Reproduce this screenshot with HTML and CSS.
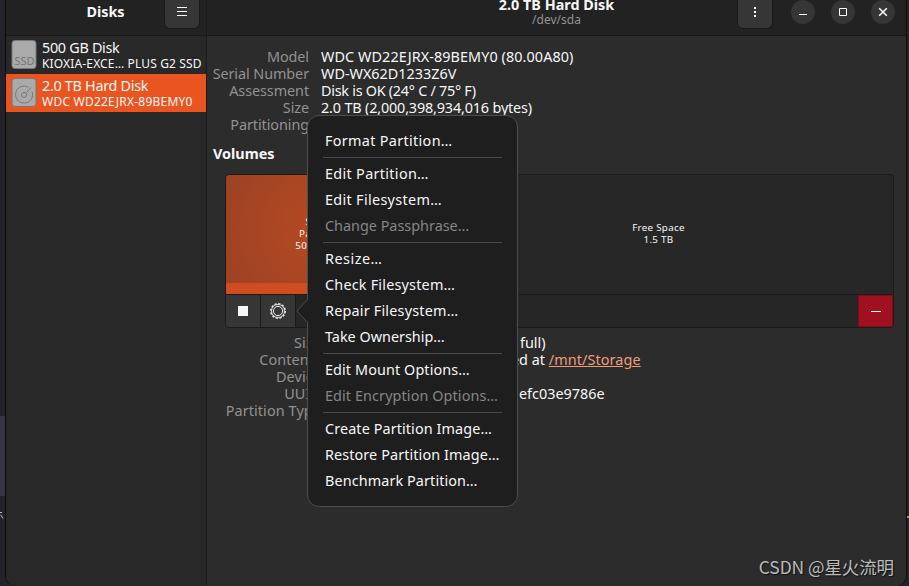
FILE: index.html
```html
<!doctype html>
<html lang="en">
<head>
    <meta charset="utf-8">
    <title>Disks</title>
    <link rel="stylesheet" href="styles.css">
</head>
<body>
<div class="desktop">
    <div class="dock"></div>
    <svg class="cursor" width="4" height="9" viewBox="0 0 4 9"><path d="M0 1.5h2M0 3.5l1.500 1.500L3 7.500" fill="none" stroke="#bbb"/></svg>
    <span class="speck"></span>

    <div class="window">
        <div class="sidebar">
            <div class="header">
                <h1>Disks</h1>
                <button class="square">
                    <svg width="12" height="12" viewBox="0 0 12 12"><path d="M1 1.500h10M1 5.500h10M1 9.500h10" stroke="#fff"/></svg>
                </button>
            </div>
            <ul class="disks">
                <li>
                    <svg width="26" height="30" viewBox="0 0 26 30">
                        <rect class="case" x="1" y=".5" width="24" height="28" rx="3"/>
                        <text x="3.500" y="25" class="ssd">SSD</text>
                    </svg>
                    <div><b>500 GB Disk</b><span class="kioxia">KIOXIA-EXCE… PLUS G2 SSD</span></div>
                </li>
                <li class="active">
                    <svg width="26" height="30" viewBox="0 0 26 30">
                        <rect class="case" x="1" y=".5" width="24" height="28" rx="3"/>
                        <g fill="none" stroke="#777">
                            <path d="M17.500 9.300A8.500 8.500 0 1 0 21.200 14"/>
                            <circle cx="13" cy="17" r="2.500"/>
                            <path d="M20 9.500l-4.500 5"/>
                        </g>
                    </svg>
                    <div><b class="hd">2.0 TB Hard Disk</b><span class="wdc">WDC WD22EJRX-89BEMY0</span></div>
                </li>
            </ul>
        </div>

        <div class="main">
            <div class="header">
                <div class="title"><b>2.0 TB Hard Disk</b><span>/dev/sda</span></div>
                <button class="square">
                    <svg width="12" height="12" viewBox="0 0 12 12"><path d="M5 1h2v2H5zM5 5h2v2H5zM5 9h2v2H5z" fill="#fff"/></svg>
                </button>
                <div class="controls">
                    <button><svg width="12" height="12" viewBox="0 0 12 12"><path d="M2 8.500h8" stroke="#fff"/></svg></button>
                    <button><svg width="12" height="12" viewBox="0 0 12 12"><path d="M2.500 2.500h7v7h-7z" fill="none" stroke="#fff"/></svg></button>
                    <button><svg width="12" height="12" viewBox="0 0 12 12"><path d="M2.200 2.200l7.600 7.600M9.800 2.200L2.200 9.800" stroke="#fff" stroke-width="1.500"/></svg></button>
                </div>
            </div>

            <dl class="info drive">
                <dt>Model</dt><dd class="model">WDC WD22EJRX-89BEMY0 (80.00A80)</dd>
                <dt>Serial Number</dt><dd>WD-WX62D1233Z6V</dd>
                <dt>Assessment</dt><dd class="smart">Disk is OK (24° C / 75° F)</dd>
                <dt>Size</dt><dd class="size">2.0 TB (2,000,398,934,016 bytes)</dd>
                <dt>Partitioning</dt><dd></dd>
            </dl>

            <h2>Volumes</h2>

            <div class="volumes">
                <div class="grid">
                    <div class="part">Storage<br>Partition 1<br>500 GB Ext4</div>
                    <div class="free">Free Space<br>1.5 TB</div>
                </div>
                <div class="toolbar">
                    <button><svg width="10" height="10" viewBox="0 0 10 10"><path d="M0 0h10v10H0z" fill="#f7f7f7"/></svg></button>
                    <button>
                        <svg width="16" height="16" viewBox="0 0 16 16" fill="none" stroke="#eee">
                            <circle cx="8" cy="8" r="7.300" stroke-width="1.300" stroke-dasharray="2.300 1.522"/>
                            <circle cx="8" cy="8" r="6.500" stroke-width=".9"/>
                            <circle cx="8" cy="8" r="4.600"/>
                        </svg>
                    </button>
                    <button class="delete"><svg width="10" height="10" viewBox="0 0 10 10"><path d="M0 5.500h10" stroke="#fff"/></svg></button>
                </div>
            </div>

            <dl class="info volume">
                <dt>Size</dt><dd class="full">full)</dd>
                <dt>Contents</dt><dd class="mount">ed at <a>/mnt/Storage</a></dd>
                <dt>Device</dt><dd></dd>
                <dt>UUID</dt><dd class="uuid">efc03e9786e</dd>
                <dt>Partition Type</dt><dd></dd>
            </dl>
        </div>
    </div>

    <div class="menu">
        <svg class="arrow" width="12" height="24" viewBox="0 0 12 24"><path d="M12 0L1 12l11 12" fill="#1e1e1e" stroke="#4d4d4d"/></svg>
        <ul>
            <li class="wide">Format Partition…</li>
        </ul>
        <ul>
            <li class="wide">Edit Partition…</li>
            <li class="wide">Edit Filesystem…</li>
            <li class="off">Change Passphrase…</li>
        </ul>
        <ul>
            <li class="wider">Resize…</li>
            <li class="mid">Check Filesystem…</li>
            <li class="mid">Repair Filesystem…</li>
            <li>Take Ownership…</li>
        </ul>
        <ul>
            <li class="slim">Edit Mount Options…</li>
            <li class="slim off">Edit Encryption Options…</li>
        </ul>
        <ul>
            <li class="slim">Create Partition Image…</li>
            <li class="slim">Restore Partition Image…</li>
            <li class="slim">Benchmark Partition…</li>
        </ul>
    </div>

    <div class="watermark">CSDN @星火流明</div>
</div>
</body>
</html>
```
FILE: styles.css
```css
*{margin: 0; padding: 0; box-sizing: border-box;}
body{width: 909px; height: 586px; overflow: hidden; background: #24232c; color: #f7f7f7; font: 14.4px/17px "Noto Sans", "Open Sans", sans-serif;}
ul{list-style: none;}
button{border: 0; color: #fff; background: #363636; display: flex; align-items: center; justify-content: center;}
svg{display: block; flex: none;}

.desktop{position: relative; width: 909px; height: 586px; padding: 0 2px 0 5px; overflow: hidden;}
.dock{position: absolute; left: 0; top: 416px; width: 5px; height: 80px; background: #37353f;}
.cursor{position: absolute; left: 0; top: 511px;}
.speck{position: absolute; right: 0; top: 516px; width: 2px; height: 2px; background: #b59b78;}

.window{display: flex; width: 902px; height: 586px; border: solid #0b0b0b; border-width: 0 1px; border-radius: 0 0 10px 10px; background: #2c2c2c; overflow: hidden;}
.header{display: flex; height: 36px; background: #222; border-bottom: 1px solid #181818;}
.square{width: 36px; height: 29px; padding-bottom: 5px; border: 1px solid #1a1a1a; border-top: 0; border-radius: 0 0 6px 6px;}

.sidebar{width: 201px; background: #282828; border-right: 1px solid #1b1b1b;}
.sidebar .header{padding-left: 41px;}
.sidebar h1{width: 117px; text-align: center; font-size: 14.4px; line-height: 24px;}
.disks li{display: flex; height: 38px; padding: 4px 0 0 5px; gap: 5px;}
.disks b, .disks span{display: block; font-weight: normal; white-space: nowrap;}
.disks b{line-height: 16px; letter-spacing: -.3px;}
.disks span{font-size: 12px; line-height: 15px;}
.disks .kioxia{letter-spacing: .15px;}
.disks .wdc{letter-spacing: .23px;}
.disks .active{background: #e95420;}
.case{fill: #aaa; stroke: #777;}
.ssd{font: 11px "Noto Sans", sans-serif; fill: #777;}

.main{flex: 1;}
.main .header{padding-left: 168px;}
.title{width: 362px; padding-left: 1px; text-align: center;}
.title b, .title span{display: block;}
.title b{line-height: 10px;}
.title span{font-size: 12px; line-height: 20px; color: #929292;}
.controls{display: flex; gap: 16px; padding-left: 18px;}
.controls button{width: 24px; height: 24px; border-radius: 50%;}

.info{display: grid; grid-auto-rows: 17px; column-gap: 12px; white-space: nowrap;}
.info dt{text-align: right; color: #929292;}
.drive{grid-template-columns: 102px 1fr; padding-top: 12px;}
.drive dt{letter-spacing: -.08px;}
.model{letter-spacing: .08px;}
.smart{letter-spacing: -.27px;}
.size{letter-spacing: -.16px;}
h2{padding: 12px 0 0 6px; font-size: 14.4px; line-height: 17px;}

.volumes{width: 669px; margin: 12px 0 0 18px; border: 1px solid #1b1b1b; border-radius: 4px; background: #262626; overflow: hidden;}
.grid{display: flex; height: 119px; text-align: center; font-size: 9.8px; line-height: 12px; letter-spacing: .3px;}
.part, .free{display: flex; align-items: center; justify-content: center;}
.part{width: 197px; border-bottom: 11px solid #cf4d20; padding-top: 9px; background: radial-gradient(circle at 50% 50%, #b84922, #994224 110%);}
.free{flex: 1; padding-bottom: 2px; border-left: 1px solid #1b1b1b; background: #272727;}
.toolbar{display: flex; height: 33px; border-top: 1px solid #1b1b1b;}
.toolbar button{width: 35px; border-right: 1px solid #1b1b1b;}
.toolbar .delete{margin-left: auto; width: 35px; background: #a01020; border: 1px solid #7c0d19;}

.volume{grid-template-columns: 114px 1fr; padding-top: 6px;}
.volume dt{letter-spacing: .1px;}
.full{padding-left: 187px;}
.mount{padding-left: 178px;}
.uuid{padding-left: 186px;}
.info a{color: #f19b7b; text-decoration: underline; letter-spacing: .1px;}

.menu{position: absolute; left: 307px; top: 115px; width: 211px; height: 392px; padding: 12px 15px; border: 1px solid #4d4d4d; border-radius: 12px; background: #1e1e1e;}
.menu ul + ul{margin-top: 3px; border-top: 1px solid #4a4a4a; padding-top: 3px;}
.menu li{height: 26px; padding-left: 2px; line-height: 26px; white-space: nowrap;}
.menu .slim{letter-spacing: .1px;}
.menu .mid{letter-spacing: .2px;}
.menu .wide{letter-spacing: .32px;}
.menu .wider{letter-spacing: .5px;}
.menu .off{color: #868686;}
.arrow{position: absolute; left: -12px; top: 183px;}

.watermark{position: absolute; right: 15px; top: 555px; font: 17.5px/24px "Noto Sans CJK SC", sans-serif; letter-spacing: -.1px; color: #bbb; text-shadow: 1px 1px 1px #111; white-space: nowrap;}
```
